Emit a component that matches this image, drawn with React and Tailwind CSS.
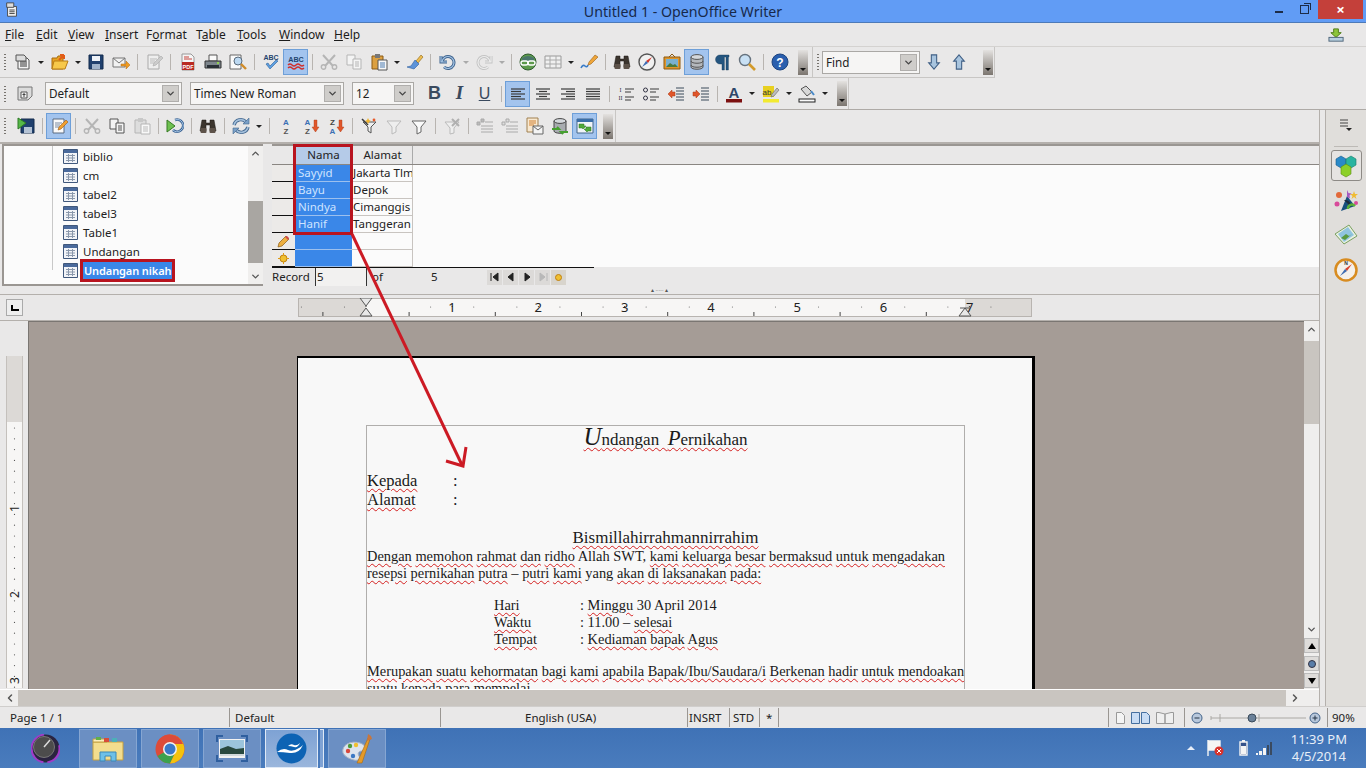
import { ChevronDown, ChevronUp, ChevronLeft, ChevronRight } from "lucide-react";

const I = ({ children, s = 18, vb = 18 }) => (
  <svg width={s} height={s} viewBox={`0 0 ${vb} ${vb}`} className="block shrink-0">
    {children}
  </svg>
);

// toolbar icons
const NewDoc = () => (
  <I>
    <path d="M4 5h9l2 2v9H4z" fill="#f4f4f4" stroke="#555" />
    <path d="M2 2h8l2 2v4H2z" fill="#dcdcdc" stroke="#555" />
    <path d="M6 9h7M6 11h7M6 13h7" stroke="#333" />
  </I>
);
const OpenFolder = () => (
  <I>
    <path d="M1 5h5l1-2h5v13H1z" fill="#e8a320" stroke="#a86c10" />
    <path d="M3 8h14l-3 8H1z" fill="#f7c84a" stroke="#b97c14" />
    <path d="M8 7l5-5M13 2h-4M13 2v4" stroke="#e25c18" strokeWidth="2" fill="none" />
  </I>
);
const Save = () => (
  <I>
    <path d="M2 2h14v14H2z" fill="#20406e" stroke="#132a4c" />
    <path d="M5 3h8v5H5z" fill="#eef2f8" />
    <path d="M5 11h8v5H5z" fill="#9fb2ca" />
  </I>
);
const Mail = () => (
  <I>
    <path d="M1 5h12v9H1z" fill="#f2f2f2" stroke="#777" />
    <path d="M1 5l6 5 6-5" fill="none" stroke="#777" />
    <path d="M9 11h5V8l4 4-4 4v-3H9z" fill="#ee9b22" stroke="#b46a10" strokeWidth=".5" />
  </I>
);
const EditDoc = ({ on }) => (
  <I>
    <path d="M3 2h11v14H3z" fill={on ? "#fafafa" : "#eee"} stroke={on ? "#5a6a80" : "#aaa"} />
    <path d="M5 6h7M5 8h5M5 10h4" stroke={on ? "#7a8aa0" : "#bbb"} />
    <path d="M8 13l1-3 7-7 2 2-7 7z" fill={on ? "#f0a030" : "#ccc"} stroke={on ? "#a05a10" : "#aaa"} strokeWidth=".6" />
  </I>
);
const Pdf = () => (
  <I>
    <path d="M3 1h9l3 3v13H3z" fill="#f5f5f5" stroke="#999" />
    <path d="M5 4h5M5 6h8" stroke="#c7433a" />
    <rect x="3" y="9" width="12" height="8" fill="#b92a22" />
    <text x="9" y="15.5" fontSize="5.5" fontWeight="700" fill="#fff" textAnchor="middle" fontFamily="Liberation Sans">PDF</text>
  </I>
);
const Printer = () => (
  <I>
    <path d="M5 2h8v6H5z" fill="#fafafa" stroke="#555" />
    <path d="M1 8h16v7H1z" fill="#7d858c" stroke="#333" />
    <path d="M3 12h12v3H3z" fill="#2a3036" />
    <rect x="13" y="9" width="2" height="2" fill="#8fd14f" />
  </I>
);
const Preview = () => (
  <I>
    <path d="M1 2h11v14H1z" fill="#fafafa" stroke="#666" />
    <circle cx="9" cy="8" r="4" fill="#bcd9f2" stroke="#5a6a7a" />
    <path d="M12 11l5 5" stroke="#d08c28" strokeWidth="2.4" />
  </I>
);
const Spell = () => (
  <I>
    <text x="9" y="7" fontSize="7" fontWeight="700" fill="#24446e" textAnchor="middle" fontFamily="Liberation Sans">ABC</text>
    <path d="M4 11l4 5 8-8-2-1-6 6-2-3z" fill="#5e9fe0" stroke="#2c5f9a" strokeWidth=".6" />
  </I>
);
const AutoSpell = () => (
  <I>
    <text x="9" y="9" fontSize="7.2" fontWeight="700" fill="#24446e" textAnchor="middle" fontFamily="Liberation Sans">ABC</text>
    <path d="M1 12q2-2 4 0t4 0 4 0 4 0M1 15q2-2 4 0t4 0 4 0 4 0" fill="none" stroke="#d0302c" strokeWidth="1.4" />
  </I>
);
const Cut = () => (
  <I>
    <path d="M3 2l10 11M15 2L5 13" stroke="#b5b5b5" strokeWidth="2" />
    <circle cx="3.5" cy="14" r="2.2" fill="none" stroke="#b5b5b5" strokeWidth="1.4" />
    <circle cx="14.5" cy="14" r="2.2" fill="none" stroke="#b5b5b5" strokeWidth="1.4" />
  </I>
);
const Copy = ({ on }) => (
  <I>
    <path d="M2 2h8v10H2z" fill="#f4f4f4" stroke={on ? "#555" : "#b5b5b5"} />
    <path d="M8 6h8v10H8z" fill="#f4f4f4" stroke={on ? "#555" : "#b5b5b5"} />
    <path d="M10 9h4M10 11h4M10 13h4" stroke={on ? "#555" : "#b5b5b5"} />
  </I>
);
const Paste = ({ on }) => (
  <I>
    <path d="M2 3h11v13H2z" fill={on ? "#dca040" : "#ddd"} stroke={on ? "#8a5a14" : "#b5b5b5"} />
    <path d="M5 1h5v4H5z" fill={on ? "#777" : "#c8c8c8"} />
    <path d="M8 7h9v10H8z" fill="#f8f8f8" stroke={on ? "#555" : "#b5b5b5"} />
    <path d="M10 10h5M10 12h5M10 14h5" stroke={on ? "#4a7ab0" : "#bbb"} />
  </I>
);
const Brush = () => (
  <I>
    <path d="M10 8l5-6 2 2-5 6z" fill="#eebc50" stroke="#8a6414" strokeWidth=".6" />
    <path d="M9 7l4 4-5 5-7-2 4-1z" fill="#5d93d8" stroke="#2f5f9f" strokeWidth=".6" />
  </I>
);
const Undo = ({ on }) => (
  <I>
    <path d="M3 3v6h6M4 9a6 6 0 1 1 2 5" fill="none" stroke={on ? "#40648e" : "#c4c4c4"} strokeWidth="3" />
    <path d="M3 3v6h6M4 9a6 6 0 1 1 2 5" fill="none" stroke={on ? "#a4c4e4" : "#ececec"} strokeWidth="1.2" />
  </I>
);
const Redo = () => (
  <I>
    <path d="M15 3v6H9M14 9a6 6 0 1 0-2 5" fill="none" stroke="#c4c4c4" strokeWidth="3" />
    <path d="M15 3v6H9M14 9a6 6 0 1 0-2 5" fill="none" stroke="#ececec" strokeWidth="1.2" />
  </I>
);
const Globe = () => (
  <I>
    <circle cx="9" cy="9" r="8" fill="#5d9a4c" stroke="#2f5a30" />
    <path d="M3 5q6-4 12 0v3H3z" fill="#3e5f80" opacity=".6" />
    <rect x="2" y="8" width="7" height="4" rx="2" fill="none" stroke="#fff" strokeWidth="1.4" />
    <rect x="9" y="8" width="7" height="4" rx="2" fill="none" stroke="#fff" strokeWidth="1.4" />
  </I>
);
const Grid = () => (
  <I>
    <path d="M1 3h16v12H1z" fill="#f0f0f0" stroke="#999" />
    <path d="M1 7h16M1 11h16M6 3v12M12 3v12" stroke="#aaa" />
  </I>
);
const Pen = () => (
  <I>
    <path d="M1 15q2-4 4-2t3-1" fill="none" stroke="#3a7cc8" strokeWidth="1.6" />
    <path d="M8 12l1-3 6-7 3 2-7 7z" fill="#efa63a" stroke="#9a6014" strokeWidth=".6" />
  </I>
);
const Binoculars = () => (
  <I>
    <path d="M3 3h4v3h4V3h4l2 11H11V8H7v6H1z" fill="#3c352e" stroke="#1c1814" strokeWidth=".5" />
    <rect x="1.5" y="11" width="6" height="5" rx="1" fill="#5d5249" />
    <rect x="10.5" y="11" width="6" height="5" rx="1" fill="#5d5249" />
  </I>
);
const Compass = () => (
  <I>
    <circle cx="9" cy="9" r="8" fill="#f1f1f1" stroke="#555" strokeWidth="1.4" />
    <path d="M14 4L8 8l2 2z" fill="#d0362c" />
    <path d="M4 14l6-4-2-2z" fill="#3d6cb4" />
  </I>
);
const Gallery = () => (
  <I>
    <path d="M1 4h16v12H1z" fill="#e0962a" stroke="#8d5a12" />
    <path d="M3 6h12v8H3z" fill="#7ab0d0" />
    <path d="M3 14l4-4 3 2 2-1 3 3z" fill="#4c7a3c" />
    <path d="M6 4l3-3 3 3" fill="none" stroke="#8d5a12" />
  </I>
);
const Db = () => (
  <I>
    <path d="M3 4v10c0 3 12 3 12 0V4z" fill="#b4b8bc" stroke="#555" />
    <ellipse cx="9" cy="4" rx="6" ry="2.4" fill="#d4d8dc" stroke="#555" />
    <path d="M3 8c0 3 12 3 12 0M3 12c0 3 12 3 12 0" fill="none" stroke="#555" />
  </I>
);
const Pilcrow = () => (
  <I>
    <path d="M16 2H7a4.5 4.5 0 0 0 0 9h2v6h2.400V4H13v13h2.400V4H16z" fill="#24557f" stroke="#173a58" strokeWidth=".4" />
  </I>
);
const Magnifier = () => (
  <I>
    <circle cx="7" cy="7" r="5.500" fill="#c8e0f4" stroke="#66727e" strokeWidth="1.400" />
    <path d="M11 11l6 6" stroke="#d39a2a" strokeWidth="2.600" />
  </I>
);
const Help = () => (
  <I>
    <circle cx="9" cy="9" r="8" fill="#2a5fae" stroke="#1c4480" />
    <text x="9" y="13.500" fontSize="12" fontWeight="700" fill="#fff" textAnchor="middle" fontFamily="Liberation Sans">?</text>
  </I>
);
const ArrowV = ({ up }) => (
  <I s={16}>
    <path
      d={up ? "M9 1l6 7h-3v9H6V8H3z" : "M9 17l6-7h-3V1H6v9H3z"}
      fill="#a8c4de"
      stroke="#3f5f85"
      strokeWidth="1.200"
    />
  </I>
);
const StyleBox = () => (
  <I>
    <path d="M2 2h14v9l-4 4H2z" fill="#dcdcdc" stroke="#777" />
    <path d="M5 7h6v6H5z" fill="#f4f4f4" stroke="#555" />
    <path d="M8 8v4M6.500 9.500H9.500" stroke="#444" />
  </I>
);
const Align = ({ w }) => (
  <I>
    {[4, 6.5, 9, 11.5, 14].map((y, i) => {
      const len = w[i % w.length];
      const x1 = w.center ? 9 - len / 2 : w.right ? 16 - len : 2;
      return <path key={y} d={`M${x1} ${y}h${len}`} stroke="#3a3a3a" strokeWidth="1.200" />;
    })}
  </I>
);
const Numbered = () => (
  <I>
    <text x="3.500" y="7" fontSize="6" fill="#334" textAnchor="middle" fontFamily="Liberation Serif">I</text>
    <text x="3.500" y="15" fontSize="6" fill="#334" textAnchor="middle" fontFamily="Liberation Serif">II</text>
    <path d="M8 4h9M8 7h6M8 12h9M8 15h6" stroke="#3a3a3a" />
  </I>
);
const Bullets = () => (
  <I>
    <circle cx="3.500" cy="5" r="2" fill="none" stroke="#334" />
    <circle cx="3.500" cy="13" r="2" fill="none" stroke="#334" />
    <path d="M8 4h9M8 7h6M8 12h9M8 15h6" stroke="#3a3a3a" />
  </I>
);
const Indent = ({ flip }) => (
  <I>
    <path d="M9 3h8M9 6h8M9 9h8M9 12h8M9 15h8" stroke="#3a4a5a" />
    <path d={flip ? "M1 7h3V5l4 4-4 4v-2H1z" : "M8 7H5V5L1 9l4 4v-2h3z"} fill="#e0552a" stroke="#a83a14" strokeWidth=".5" />
  </I>
);
const FontColor = () => (
  <I>
    <text x="9" y="12.500" fontSize="15" fontWeight="700" fill="#2e4668" textAnchor="middle" fontFamily="Liberation Sans">A</text>
    <rect x="1" y="14" width="16" height="3.500" fill="#7c1010" />
  </I>
);
const Highlight = () => (
  <I>
    <rect x="1" y="1" width="11" height="11" fill="#e8d020" />
    <text x="5" y="10" fontSize="8" fill="#333" textAnchor="middle" fontFamily="Liberation Sans">ab</text>
    <path d="M9 12l1-3 5-6 2 2-5 6z" fill="#bcbcbc" stroke="#666" strokeWidth=".6" />
    <rect x="1" y="14" width="16" height="3.500" fill="#f2ea30" />
  </I>
);
const PaintBg = () => (
  <I>
    <path d="M3 4l5-3 6 6-5 4z" fill="#d8d8d8" stroke="#555" />
    <path d="M13 6l3 4" stroke="#4a8ac8" strokeWidth="2" />
    <rect x="1" y="14" width="16" height="3" fill="#fafafa" stroke="#222" />
  </I>
);
const SaveGreen = () => (
  <I>
    <path d="M4 2h13v14H4z" fill="#20406e" stroke="#132a4c" />
    <path d="M7 10h8v6H7z" fill="#b4c2d4" />
    <path d="M1 1l8 5-8 6z" fill="#56b848" stroke="#2e7a26" />
  </I>
);
const RefreshRec = () => (
  <I>
    <path d="M1 3l8 6-8 6z" fill="#6ec050" stroke="#357a22" />
    <path d="M9 3a6 6 0 1 1-2 10" fill="none" stroke="#3c6494" strokeWidth="2.600" />
    <path d="M9 3a6 6 0 1 1-2 10" fill="none" stroke="#a4c4e4" strokeWidth="1" />
  </I>
);
const Sync = () => (
  <I>
    <path d="M2 8a7 7 0 0 1 12-3M16 10a7 7 0 0 1-12 3" fill="none" stroke="#44688f" strokeWidth="3.400" />
    <path d="M2 8a7 7 0 0 1 12-3M16 10a7 7 0 0 1-12 3" fill="none" stroke="#a4c0dc" strokeWidth="1.600" />
    <path d="M17 1v6h-6zM1 17v-6h6z" fill="#7aa0c8" stroke="#44688f" strokeWidth=".6" />
  </I>
);
const SortAZ = ({ rev, arrow }) => (
  <I>
    <text x={arrow ? 5.5 : 9} y="8" fontSize="8" fontWeight="700" fill={rev ? "#444" : "#3a6fb4"} textAnchor="middle" fontFamily="Liberation Sans">{rev ? "Z" : "A"}</text>
    <text x={arrow ? 5.5 : 9} y="16.500" fontSize="8" fontWeight="700" fill={rev ? "#3a6fb4" : "#555"} textAnchor="middle" fontFamily="Liberation Sans">{rev ? "A" : "Z"}</text>
    {arrow && <path d="M12 3h3v7h2l-3.500 5L10 10h2z" fill="#e0562a" stroke="#a83a14" strokeWidth=".4" />}
  </I>
);
const Wand = () => (
  <I>
    <path d="M3 5h13l-5 5v6l-3-2v-4z" fill="#f0f0f0" stroke="#555" />
    <path d="M2 2l6 6" stroke="#3a3a3a" strokeWidth="1.600" />
    <path d="M8 1l1 2 2 1-2 1-1 2-1-2-2-1 2-1z" fill="#f0b430" />
    <circle cx="14" cy="3" r="1.400" fill="#e85a2a" />
  </I>
);
const Funnel = ({ on }) => (
  <I>
    <path d="M2 4h14l-5 6v5l-4 2v-7z" fill={on ? "#fafafa" : "#eee"} stroke={on ? "#666" : "#bbb"} />
  </I>
);
const FunnelX = () => (
  <I>
    <path d="M2 5h14l-5 6v5l-4 1v-6z" fill="#eee" stroke="#bbb" />
    <path d="M9 2l7 7M16 2L9 9" stroke="#b0b0b0" strokeWidth="2" />
  </I>
);
const Outline = ({ dim }) => (
  <I>
    <path d="M5 2h3v3H5zM1 5h3v3H1z" fill={dim ? "#ddd" : "#bbb"} stroke="#aaa" />
    <path d="M9 5h8M5 9h12M5 12h12M5 15h12" stroke="#aaa" />
  </I>
);
const MailMerge = () => (
  <I>
    <path d="M1 1h11v14H1z" fill="#f8e8d0" stroke="#a08050" />
    <path d="M3 4h7M3 6h7M3 8h5" stroke="#d08030" />
    <path d="M7 9h10v8H7z" fill="#f4f4f4" stroke="#666" />
    <path d="M7 9l5 4 5-4" fill="none" stroke="#666" />
  </I>
);
const DbSync = () => (
  <I>
    <path d="M3 4v10c0 3 12 3 12 0V4z" fill="#a8acb0" stroke="#444" />
    <ellipse cx="9" cy="4" rx="6" ry="2.400" fill="#d4d8dc" stroke="#444" />
    <path d="M1 12h7l-2-2M17 15h-7l2 2" stroke="#46a030" strokeWidth="2" fill="none" />
  </I>
);
const DataSource = () => (
  <I>
    <path d="M1 2h16v14H1z" fill="#f0f4f8" stroke="#44668a" />
    <rect x="1" y="2" width="16" height="3" fill="#3a6ea8" />
    <path d="M3 7h5v2h2l-3 3-1-1H3zM15 10h-5v2H8l3 3 1-1h3z" fill="#4fa838" stroke="#2c7420" strokeWidth=".5" />
  </I>
);

const B = ({ on, children }) => (
  <div className={`flex h-[26px] w-[25px] shrink-0 items-center justify-center ${on ? "border border-[#6e9fd8] bg-[#a3c4ee]" : ""}`}>
    {children}
  </div>
);
const D = ({ c = "w-[12px]", dim }) => (
  <div className={`flex h-[26px] shrink-0 items-center justify-center ${c}`}>
    <div className={`h-0 w-0 border-x-[3px] border-t-[3px] border-x-transparent ${dim ? "border-t-[#aaa]" : "border-t-[#222]"}`} />
  </div>
);
const S = ({ c = "w-[8px]" }) => (
  <div className={`flex h-[26px] shrink-0 items-center justify-center ${c}`}>
    <div className="h-[16px] w-px bg-[#b8b4b0]" />
  </div>
);
const Grip = ({ c = "w-[10px]" }) => (
  <div className={`flex h-full shrink-0 flex-col justify-center gap-[2px] pl-[4px] ${c}`}>
    {[0, 1, 2, 3, 4, 5].map((n) => (
      <div key={n} className="h-px w-[2px] bg-[#77736e]" />
    ))}
  </div>
);
const Handle = () => (
  <div className="flex h-[25px] w-[10px] shrink-0 items-end justify-center bg-gradient-to-b from-[#e4e2e0] to-[#7c7670] pb-[4px]">
    <div className="h-0 w-0 border-x-[3px] border-t-[3px] border-x-transparent border-t-[#111]" />
  </div>
);
const Combo = ({ c, label }) => (
  <div className={`flex h-[23px] shrink-0 items-center justify-between border border-[#aaa8a5] bg-[#f6f5f4] pl-[3px] pr-[2px] text-[11.7px] text-[#222] ${c}`}>
    <span className="pt-[1px]">{label}</span>
    <div className="flex h-[17px] w-[17px] items-center justify-center border border-[#b0aeac] bg-[#cfcdca]">
      <ChevronDown size={11} strokeWidth={3} color="#444" />
    </div>
  </div>
);

function TitleBar() {
  return (
    <div className="relative flex h-[23px] shrink-0 items-center justify-center border-b border-[#4d7ab8] bg-[#619cf5]">
      <div className="absolute left-[4px] top-[2px]">
        <I s={16}>
          <path d="M4 5h10v11H4z" fill="#f4f4f4" stroke="#444" />
          <path d="M3 1h8v5H3z" fill="#ddd" stroke="#444" />
          <path d="M6 9h6M6 11h6M6 13h6" stroke="#333" />
        </I>
      </div>
      <span className="pt-[1px] text-[14.2px] text-[#17294a]">Untitled 1 - OpenOffice Writer</span>
      <div className="absolute right-[3px] top-0 flex h-[19px] items-start">
        <div className="mr-[17px] mt-[11px] h-[2px] w-[8px] bg-[#1c2c48]" />
        <div className="relative mr-[9px] mt-[5px] h-[9px] w-[9px] border border-[#1c2c48]">
          <div className="absolute -right-[3px] -top-[3px] h-[7px] w-[7px] border-r border-t border-[#1c2c48]" />
        </div>
        <div className="flex h-[19px] w-[45px] items-center justify-center bg-[#c4403a] text-[15px] font-bold text-white">×</div>
      </div>
    </div>
  );
}

function MenuBar() {
  return (
    <div className="flex h-[24px] shrink-0 items-center border-b border-[#d4d2d0] bg-[#e9e8e8] pl-[5px] pr-[21px] pt-[1px] text-[12px] text-[#1c1c1c]">
      <span className="w-[31px]"><u>F</u>ile</span>
      <span className="w-[32px]"><u>E</u>dit</span>
      <span className="w-[37px]"><u>V</u>iew</span>
      <span className="w-[41px]"><u>I</u>nsert</span>
      <span className="w-[50px]">F<u>o</u>rmat</span>
      <span className="w-[41px]">T<u>a</u>ble</span>
      <span className="w-[42px]"><u>T</u>ools</span>
      <span className="w-[55px]"><u>W</u>indow</span>
      <span><u>H</u>elp</span>
      <div className="ml-auto">
        <I s={17}>
          <path d="M6 2h5v4h3l-5.500 5L3 6h3z" fill="#8cc43a" stroke="#4c7a14" />
          <rect x="1" y="11" width="15" height="4" fill="#b8d0e0" stroke="#50667a" />
        </I>
      </div>
    </div>
  );
}

function StandardBars() {
  return (
    <div className="flex h-[31px] shrink-0 bg-[#e9e8e8]">
      <div className="flex h-[31px] items-center border-b border-r border-[#c8c6c4] pr-[4px]">
        <Grip />
        <B><NewDoc /></B><D />
        <B><OpenFolder /></B><D c="w-[11px]" />
        <B><Save /></B><B><Mail /></B><S />
        <B><EditDoc /></B><S c="w-[9px]" />
        <B><Pdf /></B><B><Printer /></B><B><Preview /></B><S />
        <B><Spell /></B><B on><AutoSpell /></B><S />
        <B><Cut /></B><B><Copy /></B><B><Paste on /></B><D c="w-[11px]" />
        <B><Brush /></B><S c="w-[7px]" />
        <B><Undo on /></B><D c="w-[13px]" dim />
        <B><Redo /></B><D c="w-[10px]" dim /><S />
        <B><Globe /></B><B><Grid /></B><D c="w-[11px]" />
        <B><Pen /></B><S />
        <B><Binoculars /></B><B><Compass /></B><B><Gallery /></B><B on><Db /></B><B><Pilcrow /></B><B><Magnifier /></B><S />
        <B><Help /></B>
        <div className="w-[6px]" />
        <Handle />
      </div>
      <div className="flex h-[31px] items-center border-b border-r border-[#c8c6c4]">
        <Grip c="w-[9px]" />
        <Combo c="w-[98px]" label="Find" />
        <div className="w-[1px]" />
        <B><ArrowV /></B><B><ArrowV up /></B>
        <div className="w-[12px]" />
        <Handle />
        <div className="w-[1px]" />
      </div>
    </div>
  );
}

function FormatBar() {
  return (
    <div className="flex h-[32px] shrink-0 border-b border-[#aeaaa6] bg-[#e9e8e8]">
      <div className="flex items-center border-r border-[#c8c6c4] pr-[1px]">
        <Grip c="w-[12px]" />
        <B><StyleBox /></B>
        <div className="w-[8px]" />
        <Combo c="w-[137px]" label="Default" />
        <div className="w-[8px]" />
        <Combo c="w-[154px]" label="Times New Roman" />
        <div className="w-[8px]" />
        <Combo c="w-[62px]" label="12" />
        <div className="w-[8px]" />
        <B><span className="font-['Liberation_Sans'] text-[18px] font-bold text-[#3a4a5e]">B</span></B>
        <B><span className="font-['Liberation_Serif'] text-[19px] font-bold italic text-[#3a4a5e]">I</span></B>
        <B><span className="font-['Liberation_Sans'] text-[16px] text-[#3a4a5e] underline">U</span></B>
        <S />
        <B on><Align w={[14, 10, 14, 10, 14]} /></B>
        <B><Align w={Object.assign([14, 8, 14, 8, 14], { center: true })} /></B>
        <B><Align w={Object.assign([14, 9, 14, 9, 14], { right: true })} /></B>
        <B><Align w={[14, 14, 14, 14, 14]} /></B>
        <S />
        <B><Numbered /></B><B><Bullets /></B><B><Indent /></B><B><Indent flip /></B><S />
        <B><FontColor /></B><D />
        <B><Highlight /></B><D c="w-[11px]" />
        <B><PaintBg /></B><D />
        <div className="w-[6px]" />
        <Handle />
      </div>
    </div>
  );
}

function DataBar() {
  return (
    <div className="flex h-[34px] shrink-0 border-b-2 border-[#b4b0ac] bg-[#e9e8e8]">
      <div className="flex items-center border-r border-[#c8c6c4] pr-[2px]">
        <Grip c="w-[13px]" />
        <B><SaveGreen /></B><S />
        <B on><EditDoc on /></B><S />
        <B><Cut /></B><B><Copy on /></B><B><Paste /></B><S />
        <B><RefreshRec /></B><S />
        <B><Binoculars /></B><S />
        <B><Sync /></B><D /><S />
        <B><SortAZ /></B><B><SortAZ arrow /></B><B><SortAZ rev arrow /></B><S />
        <B><Wand /></B><B><Funnel /></B><B><Funnel on /></B><S />
        <B><FunnelX /></B><S />
        <B><Outline /></B><B><Outline dim /></B><B><MailMerge /></B><B><DbSync /></B><B on><DataSource /></B>
        <div className="w-[6px]" />
        <Handle />
      </div>
    </div>
  );
}

const TableIcon = () => (
  <I s={15} vb={15}>
    <path d="M.5.5h14v14H.5z" fill="#f2f4f8" stroke="#40587c" />
    <rect x="1" y="1" width="13" height="3" fill="#4a6a9c" />
    <path d="M3 6.500h9M3 9h9M3 11.500h9M5.500 5v8M9.500 5v8" stroke="#8a98ac" />
  </I>
);

const tables = ["biblio", "cm", "tabel2", "tabel3", "Table1", "Undangan"];

function DataTree() {
  return (
    <div className="ml-[2px] flex h-[142px] w-[261px] shrink-0 border-y-2 border-l-2 border-[#9a9692] bg-[#fbfbfb]">
      <div className="relative flex-1 pl-[59px] pt-[1px] text-[11.5px] text-[#222]">
        <div className="absolute bottom-[14px] left-[48px] top-0 w-px bg-[#c8c8c8]" />
        {tables.map((t) => (
          <div key={t} className="flex h-[19px] items-center">
            <TableIcon />
            <span className="ml-[5px]">{t}</span>
          </div>
        ))}
        <div className="flex h-[19px] items-center">
          <TableIcon />
          <span className="ml-[2px] border-[3px] border-[#b8141f] bg-[#3a87e8] px-[1px] text-[11px] font-semibold leading-[17px] tracking-[-0.1px] text-white">Undangan nikah</span>
        </div>
      </div>
      <div className="flex w-[15px] shrink-0 flex-col items-center justify-between bg-[#f0efee] py-[2px]">
        <ChevronUp size={11} strokeWidth={3} color="#555" />
        <div className="mb-[8px] mt-auto h-[62px] w-full bg-[#a9a6a2]" />
        <ChevronDown size={11} strokeWidth={3} color="#555" />
      </div>
    </div>
  );
}

const records = [
  ["Sayyid", "Jakarta Tlm"],
  ["Bayu", "Depok"],
  ["Nindya", "Cimanggis"],
  ["Hanif", "Tanggeran"],
];

function GridRow({ mark, name, addr }) {
  return (
    <div className="flex h-[17px]">
      <div className="flex w-[23px] items-center justify-center border-b border-[#111] bg-[#eceae8]">{mark}</div>
      <div className="w-[57px] overflow-hidden border-b border-[#9cc0ee] bg-[#3a87e8] pl-[3px] leading-[16px] text-[#cfe4ff]">{name}</div>
      <div className="w-[61px] overflow-hidden whitespace-nowrap border-b border-r border-[#c8c4c0] bg-[#fbfbfb] pl-[1px] leading-[16px]">{addr}</div>
    </div>
  );
}

function DataGrid() {
  return (
    <div className="ml-[9px] flex h-[142px] flex-1 flex-col border-t-2 border-[#9a9692] bg-[#fbfbfb] text-[11.5px] text-[#222]">
      <div className="flex h-[19px] shrink-0 border-b border-[#8a8682] bg-[#e9e8e8]">
        <div className="w-[23px] border-r border-[#bbb]" />
        <div className="w-[57px] bg-[#b5cbe8] text-center leading-[18px]">Nama</div>
        <div className="w-[61px] border-x border-[#aaa] text-center leading-[18px]">Alamat</div>
      </div>
      {records.map((r) => (
        <GridRow key={r[0]} name={r[0]} addr={r[1]} />
      ))}
      <GridRow
        name=""
        addr=""
        mark={
          <svg width="13" height="13" viewBox="0 0 13 13">
            <path d="M1 12l1-4 7-7 3 3-7 7z" fill="#eeb040" stroke="#8a5a14" strokeWidth=".7" />
            <path d="M8 2l3 3 1-2-2-2z" fill="#d04a4a" />
          </svg>
        }
      />
      <GridRow
        name=""
        addr=""
        mark={
          <svg width="11" height="11" viewBox="0 0 11 11">
            <circle cx="5.500" cy="5.500" r="3.500" fill="#f0c030" stroke="#c08010" />
            <path d="M5.500 0v2M5.500 9v2M0 5.500h2M9 5.500h2" stroke="#e09a10" />
          </svg>
        }
      />
      <div className="h-[19px] shrink-0 bg-[#e9e8e8]">
        <div className="flex h-full w-[322px] items-center border-t border-[#111]">
          <span className="w-[43px] leading-[18px]">Record</span>
          <div className="h-full w-[52px] border-x border-[#333] bg-[#f2f1f0] pl-[1px] leading-[17px]">5</div>
          <span className="ml-[5px] w-[59px]">of</span>
          <span className="w-[56px]">5</span>
          <div className="flex gap-[1px]">
            <NavBtn d="M2 2v8M9 2L4 6l5 4z" />
            <NavBtn d="M8 2L3 6l5 4z" />
            <NavBtn d="M4 2l5 4-5 4z" />
            <NavBtn d="M3 2l5 4-5 4zM10 2v8" dim />
            <div className="flex h-[15px] w-[15px] items-center justify-center bg-[#d8d4cc]">
              <svg width="11" height="11" viewBox="0 0 11 11">
                <circle cx="5.500" cy="5.500" r="3" fill="#f0c030" stroke="#c08010" />
              </svg>
            </div>
          </div>
        </div>
      </div>
    </div>
  );
}

const NavBtn = ({ d, dim }) => (
  <div className="flex h-[15px] w-[15px] items-center justify-center bg-[#dcdad8]">
    <svg width="12" height="12" viewBox="0 0 12 12">
      <path d={d} fill={dim ? "#b8b8b8" : "#222"} stroke={dim ? "#b8b8b8" : "#222"} />
    </svg>
  </div>
);

function HRuler() {
  const nums = [1, 2, 3, 4, 5, 6, 7];
  const ticks = [];
  for (let i = -3; i < 30; i++) ticks.push(366 + i * 21.55);
  return (
    <svg width="734" height="19" viewBox="298 298 734 19" className="block">
      <rect x="298.500" y="298.500" width="733" height="18" fill="#dcd9d6" stroke="#b8b4b0" />
      <rect x="366" y="299" width="599" height="17" fill="#f7f6f5" />
      {ticks.map((x, i) =>
        x > 300 && x < 1030 && (
          i % 2 === 1 ? (
            <path key={x} d={`M${x} ${i % 4 === 1 ? 312 : 306}v${i % 4 === 1 ? 4 : 1}`} stroke="#444" />
          ) : (
            <circle key={x} cx={x} cy="307" r=".5" fill="#555" />
          )
        )
      )}
      {nums.map((n, i) => (
        <text key={n} x={452 + i * 86.300} y="312" fontSize="13" fill="#222" textAnchor="middle" fontFamily="Noto Sans">{n}</text>
      ))}
      <path d="M360 298h12l-6 8zM360 316h12l-6-8z" fill="#e8e8e8" stroke="#555" />
      <path d="M959 316h12l-6-8z" fill="#e8e8e8" stroke="#555" />
      <path d="M960 308h10" stroke="#555" />
    </svg>
  );
}

function VRuler() {
  return (
    <div className="flex w-[28px] shrink-0 flex-col items-center bg-[#e9e8e8] pt-[35px]">
      <div className="relative h-[332px] w-[17px] border-x border-[#c4c0bc] bg-[#f7f6f5]">
        <div className="h-[66px] bg-[#dcd9d6]" />
        <svg width="15" height="266" viewBox="0 0 15 266" className="block">
          {Array.from({ length: 30 }).map((_, i) => (
            <circle key={i} cx="7.500" cy={6 + i * 10.800} r=".6" fill="#555" />
          ))}
          <text x="0" y="0" transform="translate(12 90) rotate(-90)" fontSize="12" fill="#222" fontFamily="Noto Sans">1</text>
          <text x="0" y="0" transform="translate(12 176) rotate(-90)" fontSize="12" fill="#222" fontFamily="Noto Sans">2</text>
          <text x="0" y="0" transform="translate(12 262) rotate(-90)" fontSize="12" fill="#222" fontFamily="Noto Sans">3</text>
        </svg>
      </div>
    </div>
  );
}

// "~word" gets the spellcheck squiggle
const Words = ({ t }) =>
  t.split(" ").map((w, i) => (
    <span key={i}>
      {i > 0 && " "}
      {w.startsWith("~") ? (
        <span className="underline decoration-[#d42020] decoration-wavy decoration-1 underline-offset-2">{w.slice(1)}</span>
      ) : (
        w
      )}
    </span>
  ));

function Page() {
  return (
    <div className="ml-[268px] mt-[34px] h-[400px] w-[738px] border-l-[1px] border-r-[3px] border-t-[2px] border-black bg-[#f8f8f8] pl-[68px] pt-[67px]">
      <div className="h-[340px] w-[599px] border-x border-t border-[#b0aeac] font-['Liberation_Serif'] text-[#1a1a1a]">
        <div className="flex h-[22px] items-center justify-center text-[17px]">
          <span className="underline decoration-[#d42020] decoration-wavy decoration-1 underline-offset-2">
            <span className="text-[25px] italic">U</span>ndangan&nbsp;&nbsp;<span className="text-[21px] italic">P</span>ernikahan
          </span>
        </div>
        <div className="mt-[23px] flex h-[19px] items-center text-[16.5px] leading-[19px]">
          <span className="w-[86px]"><Words t="~Kepada" /></span><span>:</span>
        </div>
        <div className="flex h-[19px] items-center text-[16.5px] leading-[19px]">
          <span className="w-[86px]"><Words t="~Alamat" /></span><span>:</span>
        </div>
        <div className="mt-[19px] flex h-[20px] items-center justify-center text-[17px]">
          <Words t="~Bismillahirrahmannirrahim" />
        </div>
        <div className="text-[14.4px] leading-[17px]">
          <div className="whitespace-nowrap"><Words t="~Dengan ~memohon ~rahmat ~dan ~ridho Allah SWT, ~kami ~keluarga ~besar ~bermaksud ~untuk ~mengadakan" /></div>
          <div className="whitespace-nowrap"><Words t="~resepsi ~pernikahan ~putra – ~putri ~kami yang ~akan ~di ~laksanakan ~pada:" /></div>
          <div className="mt-[15px] flex pl-[127px]">
            <span className="w-[86px]"><Words t="~Hari" /></span><span><Words t=": ~Minggu 30 April 2014" /></span>
          </div>
          <div className="flex pl-[127px]">
            <span className="w-[86px]"><Words t="~Waktu" /></span><span><Words t=": 11.00 – ~selesai" /></span>
          </div>
          <div className="flex pl-[127px]">
            <span className="w-[86px]"><Words t="~Tempat" /></span><span><Words t=": ~Kediaman ~bapak ~Agus" /></span>
          </div>
          <div className="mt-[15px] whitespace-nowrap"><Words t="~Merupakan ~suatu ~kehormatan ~bagi ~kami ~apabila ~Bapak/Ibu/Saudara/i ~Berkenan ~hadir ~untuk ~mendoakan" /></div>
          <div className="whitespace-nowrap"><Words t="~suatu ~kepada ~para ~mempelai" /></div>
        </div>
      </div>
    </div>
  );
}

function DocArea() {
  return (
    <div className="flex min-h-0 flex-1 flex-col">
      <div className="flex h-[27px] shrink-0 items-center border-y border-[#b4b0ac] bg-[#e9e8e8] pl-[6px]">
        <div className="flex h-[17px] w-[17px] items-end justify-start border border-[#aaa] bg-[#eeeeee] pb-[4px] pl-[4px]">
          <div className="h-[6px] w-[8px] border-b-2 border-l-2 border-black" />
        </div>
        <div className="ml-[275px]"><HRuler /></div>
      </div>
      <div className="flex min-h-0 flex-1">
        <VRuler />
        <div className="min-w-0 flex-1 overflow-hidden border-l border-t border-[#7a7672] bg-[#a59c96]">
          <Page />
        </div>
        <div className="flex w-[15px] shrink-0 flex-col items-center bg-[#efeeed]">
          <ChevronUp size={11} strokeWidth={3} color="#555" className="mt-[3px]" />
          <div className="mt-[6px] h-[83px] w-full bg-[#c9c5c0]" />
          <ChevronDown size={11} strokeWidth={3} color="#555" className="mt-auto" />
          <div className="mb-[3px] mt-[3px] flex h-[15px] w-[15px] items-center justify-center border border-[#bbb] bg-[#dedcda]">
            <div className="h-0 w-0 border-x-[4px] border-b-[6px] border-x-transparent border-b-black" />
          </div>
          <div className="mb-[2px] flex h-[15px] w-[15px] items-center justify-center border border-[#bbb] bg-[#dedcda]">
            <div className="h-[8px] w-[8px] rounded-full border border-[#334] bg-[#5a7ea8]" />
          </div>
          <div className="mb-[1px] flex h-[15px] w-[15px] items-center justify-center border border-[#bbb] bg-[#dedcda]">
            <div className="h-0 w-0 border-x-[4px] border-t-[6px] border-x-transparent border-t-black" />
          </div>
        </div>
      </div>
      <div className="flex h-[17px] shrink-0 items-center border-t border-[#fff] bg-[#efeeed]">
        <ChevronLeft size={12} strokeWidth={3} color="#555" className="ml-[4px] mr-[2px] shrink-0" />
        <div className="h-full flex-1 bg-[#c9c5c0]" />
        <ChevronRight size={12} strokeWidth={3} color="#555" className="mx-[3px] shrink-0" />
        <div className="w-[15px] shrink-0" />
      </div>
    </div>
  );
}

function Sidebar() {
  return (
    <div className="flex w-[41px] shrink-0 flex-col items-center border-l border-[#b4b0ac] bg-[#e0dedb] pt-[8px]">
      <svg width="14" height="14" viewBox="0 0 14 14" className="block">
        <path d="M1 2h8M1 5h8M1 8h8" stroke="#444" strokeWidth="1.200" />
        <path d="M7 10h6l-3 3z" fill="#222" />
      </svg>
      <div className="mt-[14px] h-px w-[24px] bg-[#bdbab6]" />
      <div className="mt-[3px] flex h-[31px] w-[31px] items-center justify-center rounded-[3px] border border-[#8d8a86] bg-[#e6e4e2]">
        <svg width="22" height="24" viewBox="0 0 22 24">
          <path d="M1 5l5-3 5 3v6l-5 3-5-3z" fill="#2a8ac8" stroke="#1c5a8a" strokeWidth=".6" />
          <path d="M11 5l5-3 5 3v6l-5 3-5-3z" fill="#2ab4a0" stroke="#1c7a6a" strokeWidth=".6" />
          <path d="M6 13l5-3 5 3v7l-5 3-5-3z" fill="#8cd028" stroke="#5a8a14" strokeWidth=".6" />
        </svg>
      </div>
      <div className="mt-[7px]">
        <svg width="24" height="26" viewBox="0 0 24 26">
          <path d="M7 23L13 8l8 10z" fill="#16507c" />
          <path d="M10 12a6 6 0 0 1 7 7z" fill="#1c2c3c" />
          <circle cx="5" cy="7" r="3" fill="#e2693a" />
          <path d="M13 2l1.500 3 3 .5-2 2 .5 3-3-1.500" fill="#a65ac0" />
          <path d="M20 3l1 3h3l-2.500 2 1 3-2.500-2-2.500 2 1-3L16 6h3z" fill="#f0bb30" />
          <circle cx="3" cy="16" r="2.500" fill="#d84a9a" />
          <circle cx="22" cy="15" r="2" fill="#d84a9a" />
          <path d="M14 21a4 4 0 0 1 7-3" stroke="#5ab038" strokeWidth="2.500" fill="none" />
        </svg>
      </div>
      <div className="mt-[9px]">
        <svg width="24" height="24" viewBox="0 0 24 24">
          <path d="M1 11L15 2l8 11-13 8z" fill="#e8f0e0" stroke="#7aa060" />
          <path d="M4 11l10-7 6 8-10 7z" fill="#90c4e0" />
          <path d="M7 15l5-4 3 2 3-2-7 6z" fill="#5a9a40" />
        </svg>
      </div>
      <div className="mt-[11px]">
        <svg width="24" height="24" viewBox="0 0 24 24">
          <circle cx="12" cy="12" r="10.500" fill="#f4f0ea" stroke="#d88c20" strokeWidth="2.500" />
          <path d="M18 6L11 11l2 2z" fill="#d8402c" />
          <path d="M6 18l7-5-2-2z" fill="#3e6cb0" />
          <text x="12" y="7" fontSize="5" fontWeight="700" fill="#333" textAnchor="middle" fontFamily="Liberation Sans">N</text>
        </svg>
      </div>
    </div>
  );
}

function StatusBar() {
  return (
    <div className="flex h-[22px] shrink-0 items-center border-t border-[#d0cecc] bg-[#e9e8e8] text-[11.5px] text-[#222]">
      <div className="w-[230px] border-r border-[#9a9692] pl-[10px] leading-[19px]">Page 1 / 1</div>
      <div className="w-[211px] border-r border-[#9a9692] pl-[5px] leading-[19px]">Default</div>
      <div className="w-[247px] border-r border-[#9a9692] pl-[84px] leading-[19px]">English (USA)</div>
      <div className="w-[42px] border-r border-[#9a9692] pl-[1px] leading-[19px]">INSRT</div>
      <div className="w-[30px] border-r border-[#9a9692] pl-[3px] leading-[19px]">STD</div>
      <div className="w-[19px] border-r border-[#9a9692] pl-[6px] leading-[19px]">*</div>
      <div className="h-[19px] w-[330px] border-r border-[#9a9692]" />
      <div className="flex h-[19px] w-[76px] items-center gap-[6px] border-r border-[#9a9692] pl-[7px]">
        <svg width="9" height="12" viewBox="0 0 9 12"><path d="M.5.500h5l3 3v8h-8z" fill="#f4f4f4" stroke="#999" /></svg>
        <svg width="19" height="12" viewBox="0 0 19 12"><path d="M.5.500h8v11h-8zM10.500.500h5l3 3v8h-8z" fill="#c8dcf4" stroke="#456f9f" /></svg>
        <svg width="18" height="12" viewBox="0 0 18 12"><path d="M9 2L3 .5H.5v11h8.500zM9 2l6-1.500h2.500v11H9z" fill="#efefef" stroke="#999" /></svg>
      </div>
      <div className="flex h-[19px] w-[143px] items-center border-r border-[#9a9692] pl-[6px]">
        <svg width="136" height="14" viewBox="0 0 136 14">
          <circle cx="6" cy="7" r="5" fill="#b8c8dc" stroke="#44648a" />
          <path d="M3.500 7h5" stroke="#234" />
          <path d="M20 7h95" stroke="#aaa8a4" />
          <path d="M20 5v4M29 3v8M68 3v8" stroke="#aaa8a4" />
          <circle cx="61" cy="7" r="4" fill="#6a8098" stroke="#3a4a5a" />
          <circle cx="124" cy="7" r="5" fill="#b8c8dc" stroke="#44648a" />
          <path d="M121.500 7h5M124 4.500v5" stroke="#234" />
        </svg>
      </div>
      <div className="pl-[4px]">90%</div>
    </div>
  );
}

const TaskBtn = ({ c = "w-[58px]", on, children }) => (
  <div className={`flex h-[39px] shrink-0 items-center justify-center border ${on ? "border-[#dfe9f6] bg-gradient-to-b from-[#7ea2d4] to-[#9ab6dc]" : "border-[#86a6d2] bg-[#6b8fc3]"} ${c}`}>
    {children}
  </div>
);

function Taskbar() {
  return (
    <div className="flex h-[40px] shrink-0 items-end bg-gradient-to-b from-[#3f72b6] to-[#4a7cbd] pl-[31px]">
      <div className="mb-[5px] mr-[19px] h-[29px] w-[29px]">
        <svg width="29" height="29" viewBox="0 0 29 29">
          <circle cx="14.500" cy="14.500" r="14" fill="#2a2440" />
          <circle cx="14.500" cy="14.500" r="14" fill="none" stroke="#a03cc8" strokeWidth="2" strokeDasharray="20 4 40" />
          <circle cx="13" cy="13" r="10.500" fill="#4c4c4c" />
          <circle cx="13" cy="13" r="10.500" fill="none" stroke="#777" />
          <path d="M13 13L19 6" stroke="#ddd" strokeWidth="1.500" />
        </svg>
      </div>
      <div className="flex gap-[4px]">
        <TaskBtn>
          <svg width="32" height="28" viewBox="0 0 32 28">
            <path d="M1 7h30v18H1z" fill="#f3dd8e" stroke="#c4a040" />
            <path d="M1 4h12l2 3H1z" fill="#fbeebc" stroke="#c4a040" />
            <path d="M4 2h5v3H4z" fill="#62b04a" />
            <path d="M12 3h5v4h-5z" fill="#d84c3a" />
            <path d="M20 3h5v4h-5z" fill="#4cb0b8" />
            <path d="M8 26v-9h16v9h-5v-5h-6v5z" fill="#6ec0e8" stroke="#3a88b8" />
          </svg>
        </TaskBtn>
        <TaskBtn>
          <svg width="30" height="30" viewBox="0 0 30 30">
            <circle cx="15" cy="15" r="14.500" fill="#dd4b39" />
            <path d="M15 15L2.500 22A14.500 14.500 0 0 0 15 29.500L22 15z" fill="#3ca14d" />
            <path d="M15 .5A14.500 14.500 0 0 1 29 18a14.500 14.500 0 0 1-14 11.500L22 15H15z" fill="#f4c20d" />
            <path d="M15 .5A14.500 14.500 0 0 0 2.500 8l6 10 6.500-8h13A14.500 14.500 0 0 0 15 .5z" fill="#dd4b39" />
            <circle cx="15" cy="15" r="7" fill="#f2f2f2" />
            <circle cx="15" cy="15" r="5.500" fill="#3a78c8" />
          </svg>
        </TaskBtn>
        <TaskBtn>
          <svg width="32" height="27" viewBox="0 0 32 27">
            <path d="M1 7V1h6M25 1h6v6M31 20v6h-6M7 26H1v-6" fill="none" stroke="#2f5f9f" strokeWidth="2" />
            <path d="M3 4h26v19H3z" fill="#f2f2f2" />
            <path d="M4 5h24v16H4z" fill="#9cc4dc" />
            <path d="M4 14l8-3 8 3 8-1v8H4z" fill="#28483e" />
            <path d="M4 19h24v2H4z" fill="#d0d8da" />
          </svg>
        </TaskBtn>
        <div className="flex">
          <TaskBtn c="w-[53px]" on>
            <svg width="31" height="31" viewBox="0 0 31 31">
              <circle cx="15.500" cy="15.500" r="15" fill="#0d63b4" />
              <path d="M12 13q3-3 6-1 3 1 6-2-2 5-6 4-3-1-6-1z" fill="#fff" />
              <path d="M1 19q6-5 11-2 5 2 11-2 2-1 4-3-4 9-13 8-7-1-13-1z" fill="#fff" />
            </svg>
          </TaskBtn>
          <div className="ml-[2px] h-[39px] w-[4px] border-y border-r border-[#dfe9f6] bg-[#7ea2d4]" />
        </div>
        <TaskBtn>
          <svg width="32" height="32" viewBox="0 0 32 32">
            <path d="M2 20C0 12 10 7 19 10c8 3 6 8 2 8-3 0-5 2-3 5s-1 5-5 4-9-3-11-7z" fill="#dde4ee" stroke="#a8b4c4" />
            <circle cx="7" cy="18" r="2.200" fill="#d8483c" />
            <circle cx="9" cy="13" r="2.200" fill="#4c9a3c" />
            <circle cx="15" cy="12" r="2.200" fill="#f0c030" />
            <circle cx="12" cy="23" r="2.200" fill="#3c78c4" />
            <path d="M16 30L27 5l2 1-8 24z" fill="#e49a28" stroke="#a86a14" strokeWidth=".6" />
            <path d="M26 8l1-7 3 2 1 3z" fill="#c8763c" />
          </svg>
        </TaskBtn>
      </div>
      <div className="mb-[8px] ml-auto flex h-[24px] items-center">
        <div className="mr-[12px] h-0 w-0 border-x-[4px] border-b-[4px] border-x-transparent border-b-[#e8eef8]" />
        <svg width="18" height="18" viewBox="0 0 18 18" className="mr-[14px] block">
          <path d="M1 1v16M2 2h11v9H2z" fill="#f4f4f4" stroke="#f4f4f4" strokeWidth="1.400" />
          <circle cx="12" cy="12" r="4.500" fill="#d8322c" />
          <path d="M10 10l4 4M14 10l-4 4" stroke="#fff" />
        </svg>
        <svg width="9" height="16" viewBox="0 0 9 16" className="mr-[8px] block">
          <path d="M1 2h7v13H1z" fill="#35528a" stroke="#f4f4f4" strokeWidth="1.400" />
          <path d="M3 0h3v2H3z" fill="#f4f4f4" />
          <path d="M2 6h5v8H2z" fill="#f4f4f4" />
        </svg>
        <svg width="16" height="13" viewBox="0 0 16 13" className="mr-[19px] block">
          <path d="M0 11h2v2H0z" fill="#f4f4f4" />
          <path d="M3 9h3v4H3z" fill="#f4f4f4" />
          <path d="M7 6h3v7H7z" fill="#f4f4f4" />
          <path d="M11 3h2v10h-2zM14 0h2v13h-2z" fill="#3a4a60" />
        </svg>
        <div className="mr-[19px] text-center text-[13px] leading-[17px] text-[#e8eff8]">
          <div>11:39 PM</div>
          <div>4/5/2014</div>
        </div>
      </div>
    </div>
  );
}

export default function App() {
  return (
    <div className="relative flex h-[768px] w-[1366px] flex-col overflow-hidden bg-[#e9e8e8] font-['Noto_Sans','Open_Sans',sans-serif]">
      <TitleBar />
      <MenuBar />
      <StandardBars />
      <FormatBar />
      <div className="flex min-h-0 flex-1">
        <div className="flex min-w-0 flex-1 flex-col border-r border-[#b4b0ac]">
          <DataBar />
          <div className="flex h-[142px] shrink-0">
            <DataTree />
            <DataGrid />
          </div>
          <div className="flex h-[8px] shrink-0 items-center justify-center bg-[#e9e8e8] text-[6px] leading-none text-[#555]">▴ ····· ▴</div>
          <DocArea />
        </div>
        <div className="w-[5px] shrink-0 bg-[#e9e8e8]" />
        <Sidebar />
      </div>
      <StatusBar />
      <Taskbar />
      {/* red annotation drawn over the screenshot */}
      <div className="pointer-events-none absolute left-[293px] top-[144px] h-[91px] w-[60px] border-[3px] border-[#b8141f]" />
      <svg width="1366" height="768" viewBox="0 0 1366 768" className="pointer-events-none absolute left-0 top-0">
        <path d="M352 234L462 465" stroke="#cc1a24" strokeWidth="3" fill="none" />
        <path d="M446 461L463 466L466 447" stroke="#cc1a24" strokeWidth="3" fill="none" />
      </svg>
    </div>
  );
}
